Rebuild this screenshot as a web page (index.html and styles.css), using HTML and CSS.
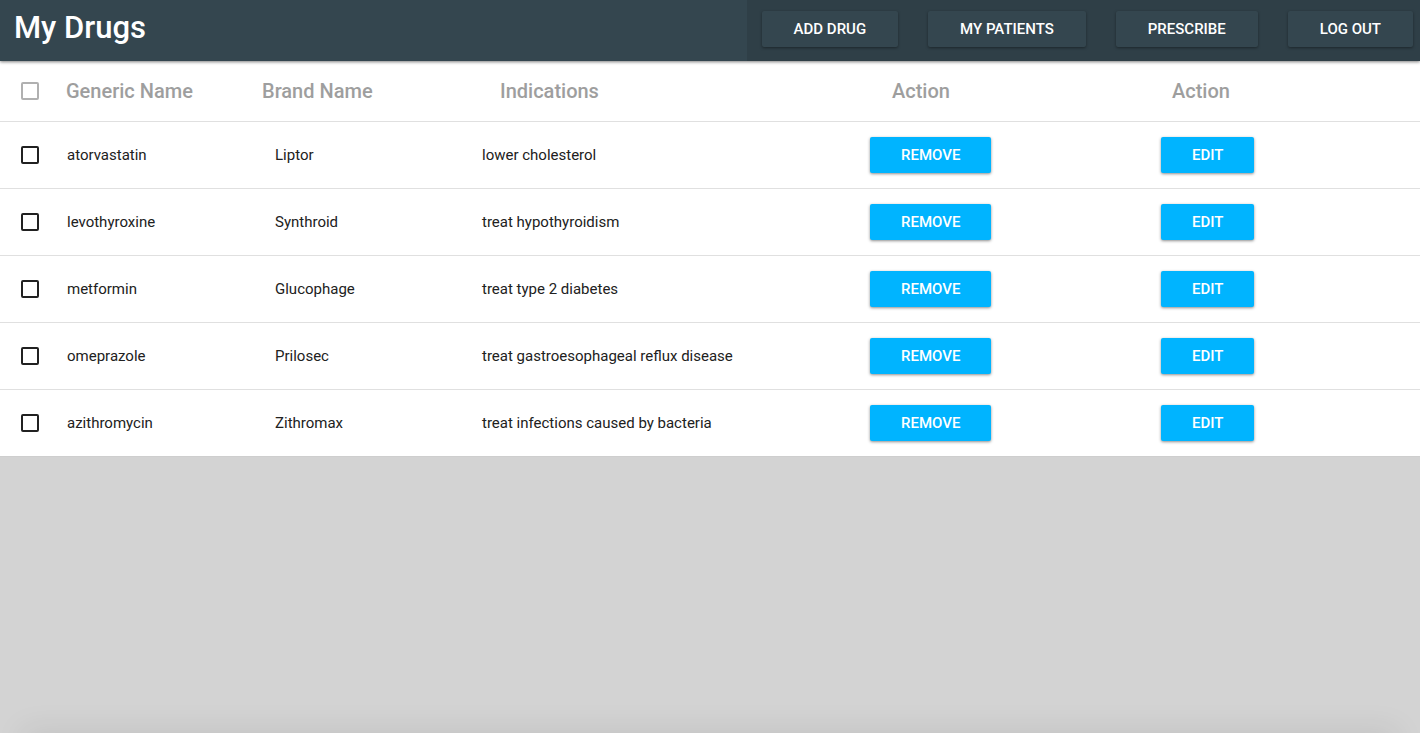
FILE: index.html
```html
<!DOCTYPE html>
<html lang="en">
<head>
<meta charset="utf-8">
<title>My Drugs</title>
<link rel="stylesheet" href="styles.css">
</head>
<body>
<header class="bar">
  <h1 class="title">My Drugs</h1>
  <nav class="nav">
    <button class="btn btn-dark" type="button">ADD DRUG</button>
    <button class="btn btn-dark" type="button">MY PATIENTS</button>
    <button class="btn btn-dark" type="button">PRESCRIBE</button>
    <button class="btn btn-dark" type="button">LOG OUT</button>
  </nav>
</header>
<main class="main">
  <table class="drugs">
    <thead>
      <tr class="head-row">
        <th><input class="check check-muted" type="checkbox" aria-label="Select all drugs"></th>
        <th>Generic Name</th>
        <th>Brand Name</th>
        <th>Indications</th>
        <th>Action</th>
        <th>Action</th>
      </tr>
    </thead>
    <tbody>
      <tr class="row">
        <td><input class="check" type="checkbox" aria-label="Select atorvastatin"></td>
        <td>atorvastatin</td>
        <td>Liptor</td>
        <td>lower cholesterol</td>
        <td><button class="btn btn-blue" type="button">REMOVE</button></td>
        <td><button class="btn btn-blue" type="button">EDIT</button></td>
      </tr>
      <tr class="row">
        <td><input class="check" type="checkbox" aria-label="Select levothyroxine"></td>
        <td>levothyroxine</td>
        <td>Synthroid</td>
        <td>treat hypothyroidism</td>
        <td><button class="btn btn-blue" type="button">REMOVE</button></td>
        <td><button class="btn btn-blue" type="button">EDIT</button></td>
      </tr>
      <tr class="row">
        <td><input class="check" type="checkbox" aria-label="Select metformin"></td>
        <td>metformin</td>
        <td>Glucophage</td>
        <td>treat type 2 diabetes</td>
        <td><button class="btn btn-blue" type="button">REMOVE</button></td>
        <td><button class="btn btn-blue" type="button">EDIT</button></td>
      </tr>
      <tr class="row">
        <td><input class="check" type="checkbox" aria-label="Select omeprazole"></td>
        <td>omeprazole</td>
        <td>Prilosec</td>
        <td>treat gastroesophageal reflux disease</td>
        <td><button class="btn btn-blue" type="button">REMOVE</button></td>
        <td><button class="btn btn-blue" type="button">EDIT</button></td>
      </tr>
      <tr class="row">
        <td><input class="check" type="checkbox" aria-label="Select azithromycin"></td>
        <td>azithromycin</td>
        <td>Zithromax</td>
        <td>treat infections caused by bacteria</td>
        <td><button class="btn btn-blue" type="button">REMOVE</button></td>
        <td><button class="btn btn-blue" type="button">EDIT</button></td>
      </tr>
    </tbody>
  </table>
</main>
<div class="edge-shade"></div>
</body>
</html>
```

FILE: styles.css
```css
* {
  box-sizing: border-box;
}

body {
  margin: 0;
  min-height: 100vh;
  background: #d3d3d3;
  color: #212121;
  font-family: Roboto, "Liberation Sans", sans-serif;
  font-size: 15px;
  line-height: 20px;
}

.bar {
  position: relative;
  display: flex;
  justify-content: space-between;
  background: #34464f;
  color: #fff;
  box-shadow: 0 1px 3px rgba(0, 0, 0, 0.5);
}

.title {
  margin: 0;
  padding: 8px 14px 13px;
  font-size: 31px;
  font-weight: 500;
  line-height: 40px;
}

.nav {
  display: flex;
  align-items: flex-start;
  gap: 30px;
  padding: 11px 7px 0 15px;
  background: #2f3f47;
}

.btn {
  height: 36px;
  border: 0;
  border-radius: 2px;
  color: #fff;
  font: 500 15px/36px Roboto, "Liberation Sans", sans-serif;
  white-space: nowrap;
  cursor: pointer;
}

.btn-dark {
  padding: 0 32px;
  background: #34464f;
  box-shadow: 0 1px 3px rgba(0, 0, 0, 0.4);
}

.btn-blue {
  padding: 0 31px;
  background: #00b4ff;
  box-shadow: 0 1px 3px rgba(0, 0, 0, 0.45);
}

.drugs,
.drugs thead,
.drugs tbody {
  display: block;
  width: 100%;
}

.drugs {
  background: #fff;
}

.head-row,
.row {
  display: grid;
  align-items: center;
  border-bottom: 1px solid #e0e0e0;
}

.head-row {
  grid-template-columns: 66fr 196fr 238fr 392fr 280fr 248fr;
  height: 61px;
  color: #9e9e9e;
  font-size: 20px;
}

.row {
  grid-template-columns: 67fr 208fr 207fr 388fr 291fr 259fr;
  height: 67px;
}

.row:last-child {
  border-color: #cecece;
}

.drugs th,
.drugs td {
  padding: 0;
  font-weight: 400;
  text-align: left;
}

.drugs th {
  font-weight: 500;
}

.check {
  display: block;
  width: 18px;
  height: 18px;
  margin: 0 0 0 21px;
  border: 2px solid #212121;
  border-radius: 2px;
  appearance: none;
  background: #fff;
}

.check:checked {
  background: #00b4ff;
}

.check-muted {
  border-color: #b0b0b0;
}

.edge-shade {
  position: fixed;
  right: 0;
  bottom: 0;
  left: 0;
  height: 36px;
  overflow: hidden;
  pointer-events: none;
}

.edge-shade::after {
  content: "";
  position: absolute;
  top: 100%;
  right: 26px;
  left: 26px;
  height: 20px;
  box-shadow: 0 0 30px 4px rgba(0, 0, 0, 0.08);
}
```
